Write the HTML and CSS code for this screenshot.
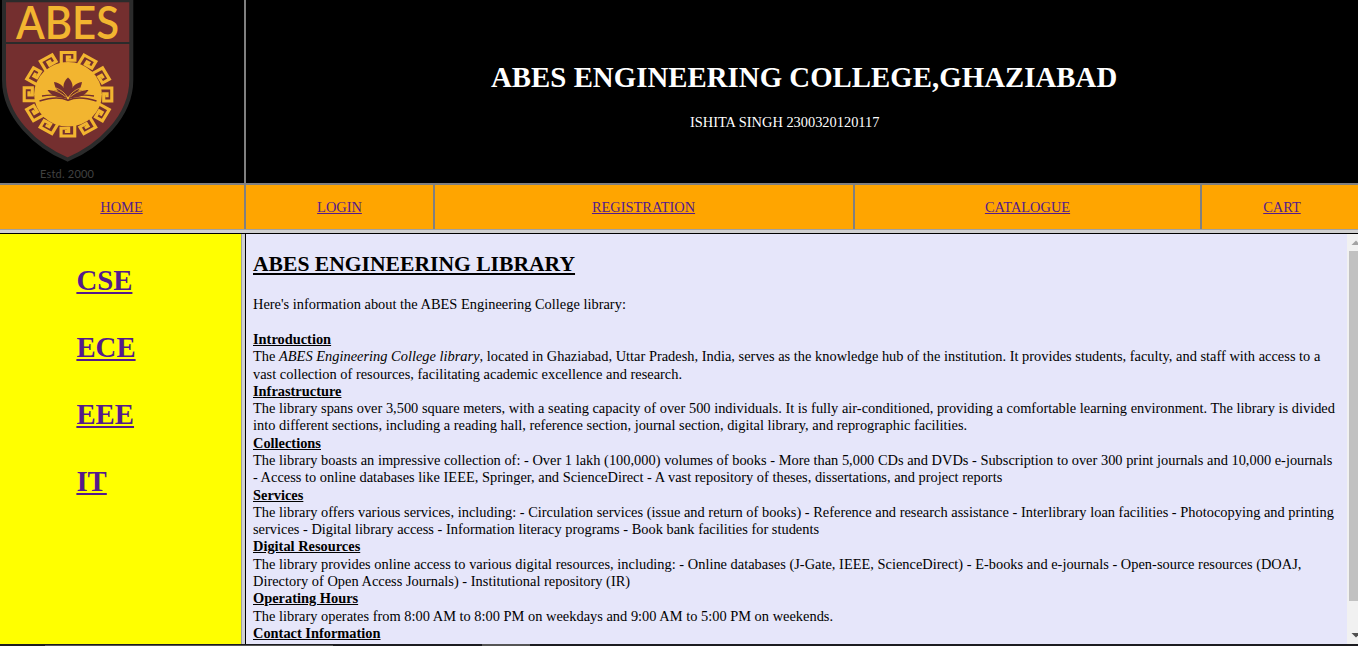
FILE: index.html
```html
<!DOCTYPE html>
<html lang="en">
<head>
<meta charset="utf-8">
<title>ABES Engineering College</title>
<link rel="stylesheet" href="styles.css">
</head>
<body>
<div class="page">
  <header class="banner">
    <div class="logo-cell">
      <svg class="logo" width="140" height="183" viewBox="0 0 140 183">
        <defs>
          <path id="key" d="M-6.400 -30V-41.700H6.600V-34H-0.600V-37.200H3" fill="none" stroke="#f2b530" stroke-width="3"/>
        </defs>
        <path d="M4 .2H131.3V80C131.3 117 98 147 67.6 159.5C37 147 4 117 4 80Z" fill="#742f2f" stroke="#2b2b2b" stroke-width="4"/>
        <path d="M4 43H131" stroke="#2b2b2b" stroke-width="2"/>
        <text class="logo-name" x="16" y="38.600" textLength="103" lengthAdjust="spacingAndGlyphs">ABES</text>
        <g transform="translate(68 94.3) scale(1.05 1)">
          <circle r="32.3" fill="#f2b530"/>
          <use href="#key"/><use href="#key" transform="rotate(30)"/><use href="#key" transform="rotate(60)"/>
          <use href="#key" transform="rotate(90)"/><use href="#key" transform="rotate(120)"/><use href="#key" transform="rotate(150)"/>
          <use href="#key" transform="rotate(180)"/><use href="#key" transform="rotate(210)"/><use href="#key" transform="rotate(240)"/>
          <use href="#key" transform="rotate(270)"/><use href="#key" transform="rotate(300)"/><use href="#key" transform="rotate(330)"/>
        </g>
        <g fill="#742f2f">
          <path d="M68 77.5C74 83 74 89 68.4 97H67.6C62 89 62 83 68 77.5Z"/>
          <path d="M54 82C61 83 66 88 67 97C59 94 55 89 54 82ZM82 82C75 83 70 88 69 97C77 94 81 89 82 82Z"/>
          <path d="M47.500 90C57 89.500 63 92 67 98C58 98 51 96 47.500 90ZM88.500 90C79 89.500 73 92 69 98C78 98 85 96 88.500 90Z"/>
        </g>
        <path d="M50 89.800Q60 91 66.500 98M86 89.800Q76 91 69.500 98M56 88Q64 91 67 97M80 88Q72 91 69 97" stroke="#f2b530" stroke-width=".8" fill="none"/>
        <path d="M42 96Q57 93.500 67 98.500M94 96Q79 93.500 69 98.500" stroke="#742f2f" stroke-width="1.300" fill="none"/>
        <path d="M39.500 101Q57 95.500 68 100.300Q79 95.500 96.500 101" stroke="#742f2f" stroke-width="1.600" fill="none"/>
        <text class="logo-year" x="40" y="178" textLength="54">Estd. 2000</text>
      </svg>
    </div>
    <div class="title-cell">
      <h1>ABES ENGINEERING COLLEGE,GHAZIABAD</h1>
      <p>ISHITA SINGH 2300320120117</p>
    </div>
  </header>
  <nav class="menu">
    <a href="#">HOME</a><a href="#">LOGIN</a><a href="#">REGISTRATION</a><a href="#">CATALOGUE</a><a href="#">CART</a>
  </nav>
  <div class="frame-bar"></div>
  <div class="frames">
    <aside class="branches">
      <a href="#">CSE</a><a href="#">ECE</a><a href="#">EEE</a><a href="#">IT</a>
    </aside>
    <div class="frame-split"></div>
    <main class="library">
      <h2>ABES ENGINEERING LIBRARY</h2>
      <p class="lead">Here's information about the ABES Engineering College library:</p>
      <h3>Introduction</h3>
      <p>The <i>ABES Engineering College library</i>, located in Ghaziabad, Uttar Pradesh, India, serves as the knowledge hub of the institution. It provides students, faculty, and staff with access to a<br>vast collection of resources, facilitating academic excellence and research.</p>
      <h3>Infrastructure</h3>
      <p>The library spans over 3,500 square meters, with a seating capacity of over 500 individuals. It is fully air-conditioned, providing a comfortable learning environment. The library is divided<br>into different sections, including a reading hall, reference section, journal section, digital library, and reprographic facilities.</p>
      <h3>Collections</h3>
      <p>The library boasts an impressive collection of: - Over 1 lakh (100,000) volumes of books - More than 5,000 CDs and DVDs - Subscription to over 300 print journals and 10,000 e-journals<br>- Access to online databases like IEEE, Springer, and ScienceDirect - A vast repository of theses, dissertations, and project reports</p>
      <h3>Services</h3>
      <p>The library offers various services, including: - Circulation services (issue and return of books) - Reference and research assistance - Interlibrary loan facilities - Photocopying and printing<br>services - Digital library access - Information literacy programs - Book bank facilities for students</p>
      <h3>Digital Resources</h3>
      <p>The library provides online access to various digital resources, including: - Online databases (J-Gate, IEEE, ScienceDirect) - E-books and e-journals - Open-source resources (DOAJ,<br>Directory of Open Access Journals) - Institutional repository (IR)</p>
      <h3>Operating Hours</h3>
      <p>The library operates from 8:00 AM to 8:00 PM on weekdays and 9:00 AM to 5:00 PM on weekends.</p>
      <h3>Contact Information</h3>
    </main>
    <div class="scrollbar">
      <svg class="arrow" width="11" height="17" viewBox="0 0 11 17"><path d="M4.500 11L9 6.500L13.500 11Z" fill="#a3a3a3"/></svg>
      <div class="thumb"></div>
      <svg class="arrow" width="11" height="17" viewBox="0 0 11 17"><path d="M4.500 8L9 12.500L13.500 8Z" fill="#505050"/></svg>
    </div>
  </div>
  <div class="taskbar"><span class="open-app"></span><span class="active-app"></span></div>
</div>
</body>
</html>
```
FILE: styles.css
```css
* { box-sizing: border-box; }
body { margin: 0; background: #fff; font: 14.4px/17.28px "Liberation Serif", "Times New Roman", serif; color: #000; overflow: hidden; }
.page { width: 1358px; height: 646px; display: flex; flex-direction: column; overflow: hidden; }
.banner { height: 185px; display: flex; background: #000; border-bottom: 2px solid gray; color: #fff; }
.logo-cell { width: 246px; border-right: 2px solid gray; }
.logo { display: block; overflow: visible; }
.logo-name { font: 600 46px Lato, sans-serif; fill: #f2b530; }
.logo-year { font: 11px Lato, sans-serif; fill: #404040; }
.title-cell { flex: 1; padding: 61px 0 0 245px; white-space: nowrap; }
.title-cell h1 { margin: 0; font-size: 28.8px; line-height: 33px; letter-spacing: .04px; }
.title-cell p { margin: 20px 0 0 199px; }
.menu { height: 44px; display: grid; grid-template-columns: 246px 189px 420px 347px 156px; background: orange; }
.menu a { color: #551a8b; text-align: center; padding: 14px 1px 0 0; border-right: 2px solid gray; }
.menu a:last-child { border-right: 0; padding-left: 5px; }
.menu a:nth-child(2), .menu a:nth-child(4) { padding-right: 0; }
.frame-bar { height: 5px; background: #d0d0d0; border-top: 1px solid #a0a0a0; border-bottom: 1px solid #000; }
.frames { height: 410px; display: flex; }
.branches { width: 241px; background: #ff0; padding: 30px 0 0 76.4px; display: flex; flex-direction: column; align-items: flex-start; gap: 34px; }
.branches a { font-weight: bold; font-size: 28.8px; line-height: 33px; color: #551a8b; }
.frame-split { width: 5px; background: #d0d0d0; border-left: 1px solid #a0a0a0; border-right: 1px solid #000; }
.library { width: 1101px; background: #e6e6fa; padding: 17.4px 0 0 7px; white-space: nowrap; overflow: hidden; }
.library h2 { margin: 0 0 18.95px; font-size: 21.6px; line-height: 26px; text-decoration: underline; }
.library h3 { margin: 0; font-size: 14.4px; text-decoration: underline; }
.library p { margin: 0; letter-spacing: .01px; }
.library .lead { margin-bottom: 17.4px; }
.scrollbar { width: 11px; background: #f1f1f1; display: flex; flex-direction: column; }
.arrow { display: block; }
.thumb { height: 350px; margin: 0 0 24px 2px; background: #c1c1c1; }
.taskbar { height: 2px; background: #1c1c20; display: flex; align-items: flex-end; }
.open-app { width: 288px; height: 1px; margin-left: 45px; background: #555; }
.active-app { width: 48px; height: 2px; margin-left: 149px; background: #555; }
```
